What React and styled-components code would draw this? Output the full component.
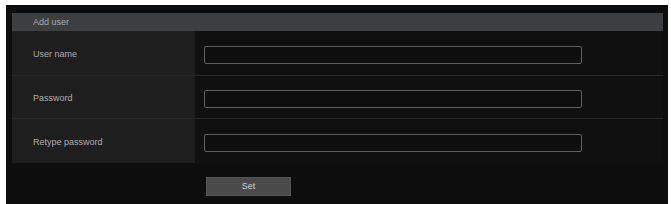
import React from "react";
import styled, { createGlobalStyle } from "styled-components";

const Global = createGlobalStyle`
  html, body { margin: 0; padding: 0; background: #ffffff; }
  body { font-family: "Liberation Sans", Arial, sans-serif; }
`;

const Panel = styled.div`
  margin: 5px 0 0 6px;
  width: 662px;
  height: 199px;
  box-sizing: border-box;
  background: #0d0d0d;
  padding: 8px 5px 0 6px;
  display: flex;
  flex-direction: column;
`;

const Header = styled.div`
  height: 18px;
  background: #3c3e40;
  color: #a9abad;
  font-size: 9px;
  line-height: 18px;
  padding-left: 21px;
`;

const Form = styled.div`
  display: flex;
  flex-direction: column;
  background: #101010;
`;

const Row = styled.div`
  display: grid;
  grid-template-columns: 183px 1fr;
  height: ${(p) => p.$h}px;
  border-top: ${(p) => (p.$sep ? "1px solid #262626" : "none")};
`;

const Label = styled.div`
  background: #1e1e1f;
  color: #acacac;
  font-size: 9px;
  display: flex;
  align-items: center;
  padding-left: 21px;
  padding-top: 2px;
`;

const Cell = styled.div`
  display: flex;
  align-items: center;
  padding-left: 9px;
  padding-top: 3px;
`;

const Input = styled.input`
  width: 378px;
  height: 18px;
  box-sizing: border-box;
  background: #0e0e0e;
  border: 1.5px solid #5e5e5e;
  border-radius: 2px;
  outline: none;
  color: #ccc;
  font-size: 9px;
`;

const Actions = styled.div`
  padding: 12px 0 0 194px;
`;

const SetButton = styled.button`
  width: 85px;
  height: 19px;
  background: #4a4a4a;
  border: 1px solid #555;
  color: #d0d0d0;
  font-family: "Liberation Sans", Arial, sans-serif;
  font-size: 9px;
  padding: 0;
  cursor: pointer;
`;

const fields = [
  { label: "User name", type: "text", h: 44 },
  { label: "Password", type: "password", h: 42 },
  { label: "Retype password", type: "password", h: 44 },
];

export default function App() {
  return (
    <>
      <Global />
      <Panel>
        <Header>Add user</Header>
        <Form>
          {fields.map((f, i) => (
            <Row key={f.label} $h={f.h} $sep={i > 0}>
              <Label>{f.label}</Label>
              <Cell>
                <Input type={f.type} />
              </Cell>
            </Row>
          ))}
        </Form>
        <Actions>
          <SetButton>Set</SetButton>
        </Actions>
      </Panel>
    </>
  );
}
